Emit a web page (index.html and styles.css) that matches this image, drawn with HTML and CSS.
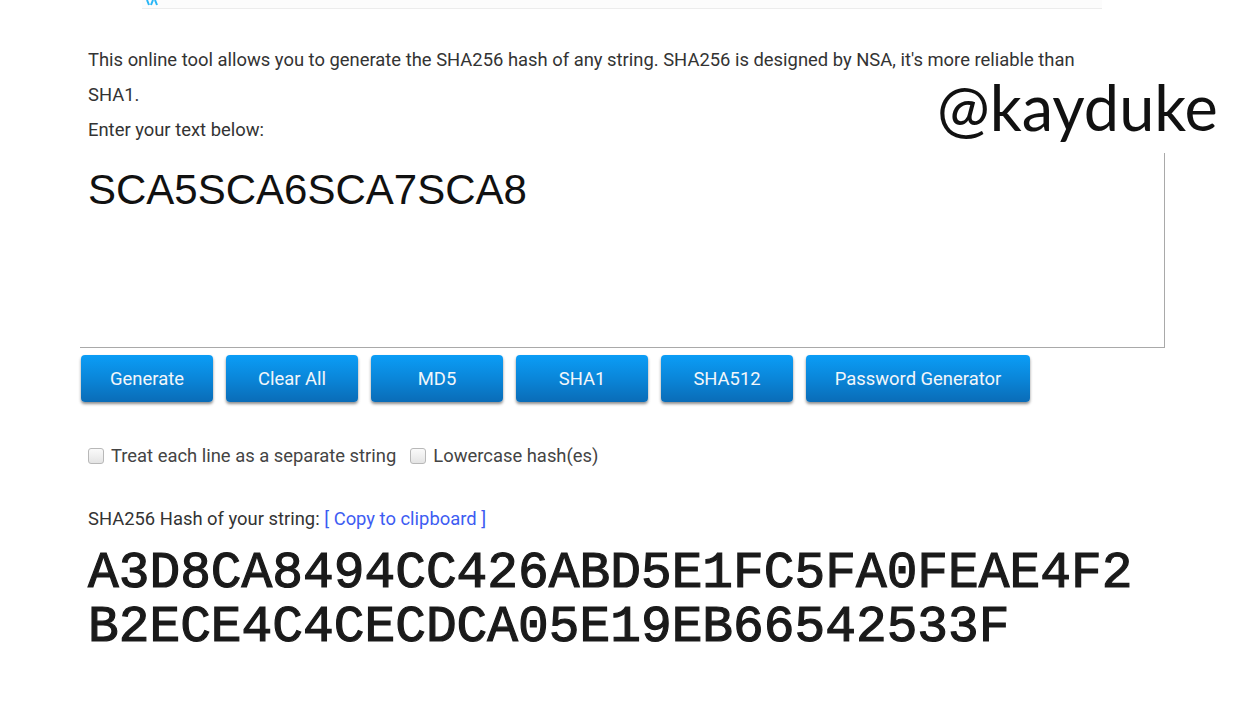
FILE: index.html
```html
<!DOCTYPE html>
<html>
<head>
<meta charset="utf-8">
<link rel="stylesheet" href="styles.css">
</head>
<body>
<div class="topbar">
  <svg class="topicon" width="14" height="6" viewBox="0 0 14 6"><path d="M2 0 L4 5 M8 0 L6 5 M10 0 L12 5" stroke="#29b6f6" stroke-width="2" fill="none"/></svg>
</div>
<main class="content">
  <p class="intro">This online tool allows you to generate the SHA256 hash of any string. SHA256 is designed by NSA, it's more reliable than SHA1.<br>Enter your text below:</p>
  <div class="input-box">SCA5SCA6SCA7SCA8</div>
  <div class="buttons">
    <button class="btn">Generate</button>
    <button class="btn">Clear All</button>
    <button class="btn">MD5</button>
    <button class="btn">SHA1</button>
    <button class="btn">SHA512</button>
    <button class="btn wide">Password Generator</button>
  </div>
  <div class="options">
    <label class="opt"><span class="check"></span>Treat each line as a separate string</label>
    <label class="opt"><span class="check"></span>Lowercase hash(es)</label>
  </div>
  <p class="result-label">SHA256 Hash of your string: <a class="copy">[ Copy to clipboard ]</a></p>
  <div class="hash">A3D8CA8494CC426ABD5E1FC5FA0FEAE4F2B2ECE4C4CECDCA05E19EB66542533F</div>
</main>
<div class="watermark">@kayduke</div>
</body>
</html>
```
FILE: styles.css
```css
html, body {
  margin: 0;
  padding: 0;
  background: #fff;
}
body {
  position: relative;
  width: 1235px;
  height: 720px;
  overflow: hidden;
  font-family: Roboto, "Liberation Sans", sans-serif;
  color: #333;
}
.topbar {
  margin-left: 142px;
  width: 960px;
  height: 8px;
  background: #fcfcfc;
  border-bottom: 1px solid #ececec;
  position: relative;
}
.topicon {
  position: absolute;
  left: 3px;
  top: 0;
}
.content {
  padding-left: 80px;
  display: flex;
  flex-direction: column;
  align-items: flex-start;
}
.intro {
  margin: 33px 0 0 8px;
  width: 1000px;
  font-size: 18.4px;
  line-height: 35px;
  color: #333;
}
.input-box {
  margin-top: 6px;
  box-sizing: border-box;
  width: 1085px;
  height: 195px;
  padding: 13px 8px;
  border-right: 1px solid #a9a9a9;
  border-bottom: 1px solid #a9a9a9;
  font-family: "Liberation Sans", Arial, sans-serif;
  font-size: 42px;
  line-height: 48px;
  color: #111;
}
.buttons {
  margin-top: 7px;
  margin-left: 1px;
  display: flex;
  gap: 13px;
}
.btn {
  width: 132px;
  height: 47px;
  border: none;
  border-radius: 4px;
  background: linear-gradient(to bottom, #0b9df6 0%, #0a86d9 50%, #0a6cb7 100%);
  box-shadow: 0 2px 3px rgba(0, 0, 0, 0.45);
  color: #f2f6fa;
  font-family: Roboto, "Liberation Sans", sans-serif;
  font-size: 18.4px;
  padding: 0;
}
.btn.wide {
  width: 224px;
}
.options {
  margin: 44px 0 0 8px;
  display: flex;
  gap: 14px;
  font-size: 18.4px;
  color: #444;
}
.opt {
  display: flex;
  align-items: center;
  gap: 7px;
  line-height: 20px;
}
.check {
  width: 14px;
  height: 14px;
  border: 1px solid #b8b8b8;
  border-radius: 3px;
  background: linear-gradient(to bottom, #fafafa, #e4e4e4);
}
.result-label {
  margin: 42px 0 0 8px;
  font-size: 18.4px;
  line-height: 22px;
  color: #333;
}
.copy {
  color: #3d5cf2;
}
.hash {
  margin: 16px 0 0 8px;
  width: 1060px;
  word-break: break-all;
  font-family: "Liberation Mono", "Courier New", monospace;
  font-weight: normal;
  -webkit-text-stroke: 1.2px #1a1a1a;
  font-size: 51.2px;
  line-height: 54px;
  color: #1a1a1a;
}
.watermark {
  position: absolute;
  left: 937px;
  top: 82px;
  font-family: Lato, "DejaVu Sans", sans-serif;
  font-size: 63px;
  line-height: 50px;
  color: #111;
  background: #fff;
  padding-right: 18px;
}
```
